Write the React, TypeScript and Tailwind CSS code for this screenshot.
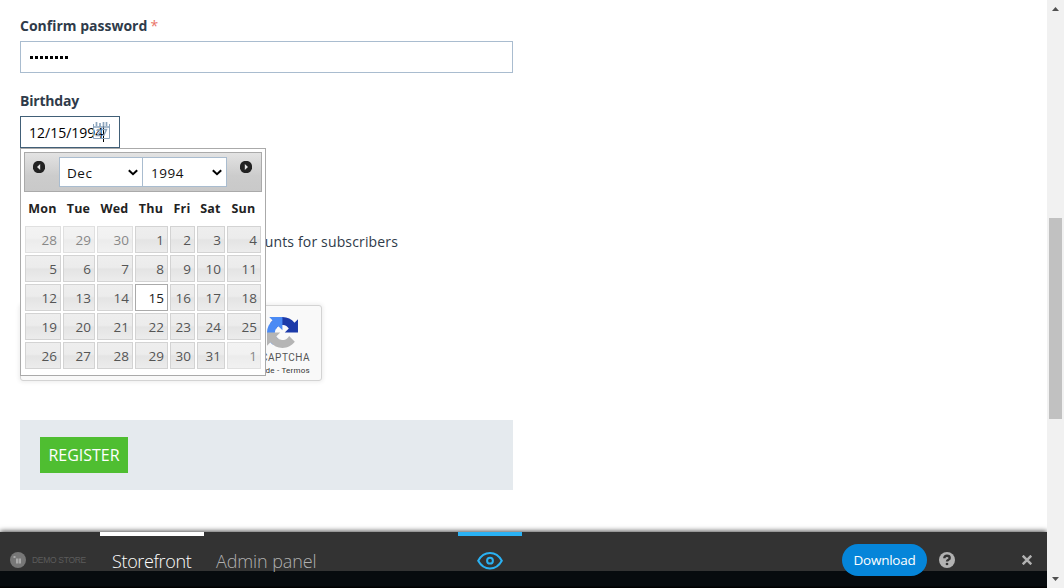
import React from 'react';

const columns = 'grid grid-cols-[36px_32px_36px_33px_25px_28px_34px] gap-x-[2px]';

const weeks: number[][] = [
  [28, 29, 30, 1, 2, 3, 4],
  [5, 6, 7, 8, 9, 10, 11],
  [12, 13, 14, 15, 16, 17, 18],
  [19, 20, 21, 22, 23, 24, 25],
  [26, 27, 28, 29, 30, 31, 1],
];

function Day({ day, muted, selected }: { day: number; muted: boolean; selected: boolean }) {
  const look = selected
    ? 'border-[#aaaaaa] bg-white text-[#212121]'
    : 'border-[#d3d3d3] bg-[linear-gradient(#eeeeee_0%,#ececec_45%,#e4e4e4_52%,#ececec_100%)] text-[#555555]';
  return (
    <button
      className={`h-[27px] border pr-[3px] pt-px text-right text-[13.5px] leading-[25px] ${look} ${muted ? 'opacity-70' : ''}`}
    >
      {day}
    </button>
  );
}

function RoundArrow({ left }: { left?: boolean }) {
  return (
    <svg width="12" height="12" viewBox="0 0 12 12" className="mt-[8px]">
      <circle cx="6" cy="6" r="6.200" fill="#222" />
      <path d={left ? 'M7.2 3v6L4 6z' : 'M4.8 3v6L8 6z'} fill="#e4e4e4" />
    </svg>
  );
}

function Select({ value, className }: { value: string; className: string }) {
  return (
    <div className={`flex h-[30px] items-center justify-between border border-[#a9bccf] bg-white pr-[4px] ${className}`}>
      <span className="pt-[2px] text-[13.5px] tracking-[0.55px] text-[#111]">{value}</span>
      <svg width="10" height="7" viewBox="0 0 10 7" fill="none" stroke="#000" strokeWidth="2">
        <path d="M.8 1.2 5 5.2l4.2-4" />
      </svg>
    </div>
  );
}

function DatePicker() {
  return (
    <div className="absolute left-0 top-[32px] z-10 h-[228px] w-[246px] border border-[#aaaaaa] bg-white p-[3px]">
      <div className="flex h-[40px] border border-[#aaaaaa] bg-[linear-gradient(#e3e3e3,#cccccc_60%,#c9c9c9)] pl-[8px] pr-[9px]">
        <RoundArrow left />
        <Select value="Dec" className="ml-[14px] mt-[4px] w-[84px] pl-[7px]" />
        <Select value="1994" className="mt-[4px] w-[84px] border-l-0 pl-[8px]" />
        <div className="ml-auto">
          <RoundArrow />
        </div>
      </div>
      <div className={`ml-[0.5px] h-[34px] ${columns} text-center text-[12.5px] font-bold leading-[33px] tracking-[0.2px] text-[#222]`}>
        {['Mon', 'Tue', 'Wed', 'Thu', 'Fri', 'Sat', 'Sun'].map((d) => (
          <span key={d}>{d}</span>
        ))}
      </div>
      <div className={`ml-px gap-y-[2px] ${columns}`}>
        {weeks.map((week, r) =>
          week.map((day, c) => (
            <Day
              key={`${r}-${c}`}
              day={day}
              muted={(r === 0 && day > 20) || (r === 4 && day < 10)}
              selected={r === 2 && day === 15}
            />
          )),
        )}
      </div>
    </div>
  );
}

function CalendarIcon() {
  return (
    <svg width="17" height="17" viewBox="0 0 17 17" fill="none" stroke="#8ca5bd" className="absolute left-[72px] top-[5px]">
      <path d="M.5 2v14.500h16V2" />
      <path d="M0 5h17M3.500 0v4M7 1v4M10.500 0v4M13.500 0v4" strokeWidth="1.700" />
      <path d="M4 9q0-1.500 1.500-1.500T7.500 9q0 1.500-3.500 4.500h4M9 7.500h4.500L10.500 14" strokeWidth="1.500" />
    </svg>
  );
}

function Captcha() {
  return (
    <div className="mt-[51px] flex h-[76px] w-[302px] justify-end rounded-[3px] border border-[#d3d3d3] bg-[#f9f9f9] pr-[11px] shadow-[0_0_4px_1px_rgba(0,0,0,0.08)]">
      <div className="flex flex-col items-end whitespace-nowrap font-['Roboto',sans-serif] text-[#555]">
        <svg width="31" height="31" viewBox="0 0 64 64" className="mr-[12.5px] mt-[11px]">
          <path fill="#1c3aa9" d="M64 31.955l-.033-1.37V4.687l-7.16 7.16C50.948 4.674 42.033.093 32.05.093c-10.400 0-19.622 4.960-25.458 12.640l11.736 11.860a15.550 15.550 0 0 1 4.754-5.334c2.050-1.600 4.952-2.906 8.968-2.906.485 0 .860.057 1.135.163 4.976.393 9.288 3.140 11.828 7.124l-8.307 8.307L64 31.953" />
          <path fill="#4a8af4" d="M31.862.094l-1.370.033H4.594l7.160 7.160C4.580 13.147 0 22.060 0 32.046c0 10.400 4.960 19.622 12.640 25.458L24.500 45.768a15.550 15.550 0 0 1-5.334-4.754c-1.600-2.050-2.906-4.952-2.906-8.968 0-.485.057-.860.163-1.135.393-4.976 3.140-9.288 7.124-11.828l8.307 8.307L31.860.095" />
          <path fill="#b5b5b5" d="M.001 32.045l.033 1.370v25.898l7.160-7.160c5.860 7.173 14.774 11.754 24.760 11.754 10.400 0 19.622-4.960 25.458-12.640l-11.736-11.860a15.550 15.550 0 0 1-4.754 5.334c-2.050 1.600-4.952 2.906-8.968 2.906-.485 0-.860-.057-1.135-.163-4.976-.393-9.288-3.140-11.828-7.124l8.307-8.307c-10.522.040-22.400.066-27.295-.005" />
        </svg>
        <span className="mt-[4px] text-[10px] leading-[12px] tracking-[0.5px]">reCAPTCHA</span>
        <span className="mt-[2px] text-[8px] leading-[10px] tracking-[0.25px] text-[#333]">Privacidade - Termos</span>
      </div>
    </div>
  );
}

function DemoBar() {
  return (
    <footer className="absolute bottom-0 left-0 flex h-[56px] w-full bg-[linear-gradient(#333333_39px,#070b0e_39px,#070b0e_54px,#000_55px)] shadow-[0_-1px_5px_rgba(0,0,0,0.7)]">
      <div className="flex w-[100px] items-start pl-[10px] pt-[20px]">
        <svg width="16" height="16" viewBox="0 0 16 16">
          <circle cx="8" cy="8" r="8" fill="#777" />
          <path d="M3.500 4h2v2h-2zM6 6.500h2.200V11.500H6zM8.700 6.500H11V11.500H8.700z" fill="#aaa" />
        </svg>
        <span className="ml-[6px] whitespace-nowrap font-['Liberation_Sans',sans-serif] text-[8.500px] leading-[17px] tracking-[-0.3px] text-[#5c5c5c]">DEMO STORE</span>
      </div>
      <div className="w-[104px] border-t-4 border-white pl-[12px] pt-[12px] text-[18px] font-light leading-[27px] tracking-[-0.350px] text-white">Storefront</div>
      <div className="w-[254px] pl-[12px] pt-[16px] text-[18px] font-light leading-[27px] tracking-[-0.1px] text-[#b0b0b0]">Admin panel</div>
      <div className="flex w-[64px] justify-center border-t-4 border-[#2ab2f4] pt-[16px]">
        <svg width="26" height="18" viewBox="0 0 26 18" fill="none" stroke="#2ab2f4" strokeWidth="2">
          <path d="M1.200 8.700Q5.500 1 13 1t11.800 7.700Q20.500 16.500 13 16.500T1.200 8.700Z" />
          <circle cx="13" cy="8.700" r="2.900" />
        </svg>
      </div>
      <div className="ml-auto flex pr-[15px] pt-[12px]">
        <button className="h-[32px] w-[85px] rounded-full bg-[#0585d9] text-[13.500px] leading-[32px] tracking-[-0.250px] text-white">Download</button>
        <svg width="16" height="16" viewBox="0 0 16 16" className="ml-[12px] mt-[8px]">
          <circle cx="8" cy="8" r="8" fill="#b2b2b2" />
          <path d="M5.300 6.200Q5.300 3.700 8 3.700t2.700 2.200Q10.700 7.100 9.300 7.800 8 8.400 8 9.600" fill="none" stroke="#333" strokeWidth="2.400" />
          <path d="M6.800 10.900h2.400v2.200H6.800z" fill="#333" />
        </svg>
        <svg width="10" height="10" viewBox="0 0 10 10" className="ml-[67px] mt-[11px]" stroke="#b2b2b2" strokeWidth="2.500">
          <path d="M.7.7l8.600 8.600M9.300.7L.7 9.300" />
        </svg>
      </div>
    </footer>
  );
}

export default function App() {
  return (
    <div className="flex h-[588px] w-[1064px] overflow-hidden bg-white font-['Open_Sans',sans-serif]">
      <main className="relative h-[588px] w-[1047px] overflow-hidden pl-[20px]">
        <form className="w-[493px]">
          <label className="block pt-[16px] text-[14px] font-bold leading-[20px] text-[#2f3b4a]">
            Confirm password <span className="-ml-[0.5px] font-normal text-[#ea7468]">*</span>
          </label>
          <div className="mt-[5px] flex h-[32px] items-center gap-[2px] border border-[#a9bccf] pl-[9px]">
            {[0, 1, 2, 3, 4, 5, 6, 7].map((n) => (
              <span key={n} className="size-[3px] bg-black" />
            ))}
          </div>
          <label className="mt-[18px] block text-[14px] font-bold leading-[20px] tracking-[-0.2px] text-[#2f3b4a]">Birthday</label>
          <div className="relative mt-[5px] h-[32px] w-[100px] border border-[#415f77]">
            <div className="flex h-[30px] items-center pl-[8px] text-[14px] text-black">
              12/15/1994
              <span className="h-[19px] w-px bg-black" />
            </div>
            <CalendarIcon />
            <div className="absolute -left-px -top-px">
              <DatePicker />
            </div>
          </div>
          <p className="mt-[82px] w-[378px] text-right text-[14px] leading-[24px] tracking-[0.15px] text-[#2f3b4a]">discounts for subscribers</p>
          <Captcha />
          <div className="mt-[39px] flex h-[70px] bg-[#e5eaee] pl-[20px] pt-[17px]">
            <button className="h-[36px] w-[88px] bg-[#4fbe31] text-[16px] leading-[36px] text-white">REGISTER</button>
          </div>
        </form>
        <DemoBar />
      </main>
      <aside className="flex w-[17px] flex-col items-center bg-[#f1f1f1]">
        <svg width="7" height="4" viewBox="0 0 7 4" className="mt-[7px]" fill="#505050">
          <path d="M3.500 0 7 4H0z" />
        </svg>
        <div className="mt-[207px] h-[201px] w-[13px] bg-[#c1c1c1]" />
        <svg width="7" height="4" viewBox="0 0 7 4" className="mb-[7px] mt-auto" fill="#505050">
          <path d="M0 0h7L3.500 4z" />
        </svg>
      </aside>
    </div>
  );
}
